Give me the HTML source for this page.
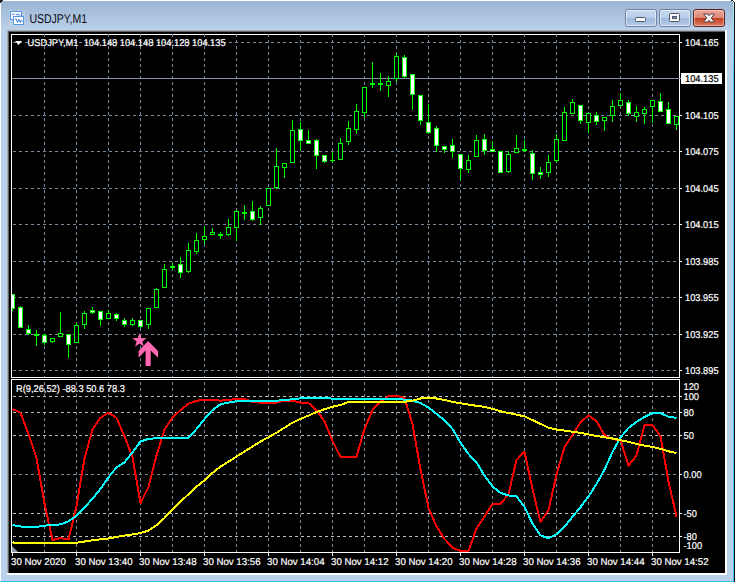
<!DOCTYPE html>
<html lang="en"><head><meta charset="utf-8"><title>USDJPY,M1</title>
<style>
html,body{margin:0;padding:0;background:#fff;}
body{width:737px;height:582px;overflow:hidden;position:relative;}
svg{position:absolute;left:0;top:0;display:block;}
text{font-family:"Liberation Sans",sans-serif;font-size:9.9px;text-rendering:geometricPrecision;}
.t{fill:#fff;}
</style></head><body>
<svg width="737" height="582" viewBox="0 0 737 582">
<defs>
<linearGradient id="tg" x1="0" y1="0" x2="0" y2="1"><stop offset="0" stop-color="#98b3d2"/><stop offset="1" stop-color="#bdd2ea"/></linearGradient>
<linearGradient id="bt" x1="0" y1="0" x2="0" y2="1"><stop offset="0" stop-color="#c6d8ee"/><stop offset="0.48" stop-color="#b9cfea"/><stop offset="0.5" stop-color="#9fb9da"/><stop offset="1" stop-color="#b4cbe8"/></linearGradient>
<linearGradient id="cl" x1="0" y1="0" x2="0" y2="1"><stop offset="0" stop-color="#eaa99c"/><stop offset="0.48" stop-color="#dc8876"/><stop offset="0.5" stop-color="#c13c1e"/><stop offset="1" stop-color="#dd7f68"/></linearGradient>
<linearGradient id="cy" x1="0" y1="2" x2="0" y2="582" gradientUnits="userSpaceOnUse"><stop offset="0" stop-color="#b4ecfa"/><stop offset="0.12" stop-color="#44c8f4"/><stop offset="1" stop-color="#38c4ee"/></linearGradient>
</defs>
<g shape-rendering="crispEdges">
<rect x="0" y="0" width="737" height="582" fill="#ffffff"/>
<rect x="734" y="3" width="1" height="579" fill="#1a1212"/>
<rect x="0" y="0" width="734" height="582" fill="#b9d1ea"/>
<rect x="0" y="0" width="734" height="31" fill="url(#tg)"/>
<rect x="0" y="0" width="734" height="1" fill="#ffffff"/>
<rect x="0" y="0" width="1" height="582" fill="#ffffff"/>
<rect x="733" y="2" width="1" height="580" fill="url(#cy)"/>
<rect x="0" y="581" width="734" height="1" fill="#2cc4e6"/>
<path d="M0 0h3v1h-1v1h-1v1h-1z" fill="#222"/>
<rect x="731" y="0" width="2" height="1" fill="#1c1c1c"/>
<rect x="733" y="0" width="1" height="1" fill="#ffffff"/>
<rect x="733" y="1" width="1" height="1" fill="#1c1c1c"/>
<rect x="734" y="2" width="1" height="1" fill="#1c1c1c"/>
<rect x="732" y="1" width="1" height="1" fill="#d8f4fc"/>
<rect x="7" y="30" width="720" height="545" fill="#ffffff"/>
<rect x="7" y="30" width="718" height="543" fill="#a9adb3"/>
<rect x="8" y="31" width="717" height="542" fill="#5f6368"/>
<rect x="9" y="32" width="716" height="541" fill="#000000"/>
</g>
<rect x="9" y="10" width="16" height="16" fill="#c9dcf3" fill-opacity="0.35"/>
<g shape-rendering="crispEdges">
<rect x="10.5" y="11.5" width="11" height="8" fill="#fbfcff" stroke="#5591f6"/>
<rect x="13.5" y="16.5" width="10" height="8" fill="#ffffff" stroke="#5591f6"/>
<rect x="12" y="11" width="1" height="1" fill="#4fae9a"/>
<rect x="15" y="11" width="1" height="1" fill="#4fae9a"/>
<rect x="18" y="11" width="1" height="1" fill="#4fae9a"/>
<rect x="16" y="16" width="1" height="1" fill="#4fae9a"/>
<rect x="19" y="16" width="1" height="1" fill="#4fae9a"/>
<rect x="22" y="16" width="1" height="1" fill="#4fae9a"/>
<rect x="15" y="24" width="1" height="1" fill="#4fae9a"/>
<rect x="18" y="24" width="1" height="1" fill="#4fae9a"/>
<rect x="21" y="24" width="1" height="1" fill="#4fae9a"/>
<rect x="10" y="13" width="1" height="1" fill="#4fae9a"/>
<rect x="10" y="16" width="1" height="1" fill="#4fae9a"/>
<rect x="13" y="19" width="1" height="1" fill="#4fae9a"/>
<rect x="23" y="19" width="1" height="1" fill="#4fae9a"/>
<rect x="13" y="22" width="1" height="1" fill="#4fae9a"/>
<rect x="23" y="22" width="1" height="1" fill="#4fae9a"/>
</g>
<polyline points="12,15 13.2,13.8 14.3,15" fill="none" stroke="#4a86f0" stroke-width="1"/>
<polyline points="15.5,13.8 16.8,15.2 18,13.8 19.2,15.2 20.5,15.2" fill="none" stroke="#4a86f0" stroke-width="1"/>
<polyline points="15,19 16.2,19 17.5,22.3 18.8,19.2 20.2,22.3 21.3,20 22.3,21.8" fill="none" stroke="#3a78e8" stroke-width="1"/>
<text x="29.4" y="23" style="font-size:12.8px" fill="#0c0c16" textLength="57.6" lengthAdjust="spacingAndGlyphs">USDJPY,M1</text>
<rect x="625.5" y="9.5" width="31" height="17" rx="2.5" ry="2.5" fill="url(#bt)" stroke="#6f83a0"/>
<rect x="626.5" y="10.5" width="29" height="15" rx="1.5" ry="1.5" fill="none" stroke="#ffffff" stroke-opacity="0.55"/>
<rect x="659.5" y="9.5" width="31" height="17" rx="2.5" ry="2.5" fill="url(#bt)" stroke="#6f83a0"/>
<rect x="660.5" y="10.5" width="29" height="15" rx="1.5" ry="1.5" fill="none" stroke="#ffffff" stroke-opacity="0.55"/>
<rect x="693.5" y="9.5" width="31" height="17" rx="2.5" ry="2.5" fill="url(#cl)" stroke="#5a1f24"/>
<rect x="694.5" y="10.5" width="29" height="15" rx="1.5" ry="1.5" fill="none" stroke="#ffd8cc" stroke-opacity="0.55"/>
<rect x="635.5" y="17.5" width="10" height="4" rx="1" fill="#fafafa" stroke="#4c5566"/>
<rect x="669.5" y="13.5" width="10" height="8" rx="1" fill="#fafafa" stroke="#4c5566"/>
<rect x="672.5" y="16.5" width="4" height="2" fill="#7f9cc4" stroke="#4c5566"/>
<path d="M703.5 14 L707.6 14 L709 15.7 L710.4 14 L714.5 14 L711.3 18 L714.5 22 L710.4 22 L709 20.3 L707.6 22 L703.5 22 L706.7 18 Z" fill="#f4f4f6" stroke="#5b4040" stroke-width="1" stroke-linejoin="round"/>
<g shape-rendering="crispEdges">
<rect x="11.5" y="34.5" width="668" height="343" fill="none" stroke="#fff"/>
<rect x="11.5" y="379.5" width="668" height="173" fill="none" stroke="#fff"/>
<line x1="44.5" y1="34" x2="44.5" y2="377" stroke="#778899" stroke-dasharray="3 3" stroke-dashoffset="0"/>
<line x1="44.5" y1="382" x2="44.5" y2="552" stroke="#778899" stroke-dasharray="3 3" stroke-dashoffset="0"/>
<line x1="76.5" y1="34" x2="76.5" y2="377" stroke="#778899" stroke-dasharray="3 3" stroke-dashoffset="0"/>
<line x1="76.5" y1="382" x2="76.5" y2="552" stroke="#778899" stroke-dasharray="3 3" stroke-dashoffset="0"/>
<line x1="108.5" y1="34" x2="108.5" y2="377" stroke="#778899" stroke-dasharray="3 3" stroke-dashoffset="0"/>
<line x1="108.5" y1="382" x2="108.5" y2="552" stroke="#778899" stroke-dasharray="3 3" stroke-dashoffset="0"/>
<line x1="140.5" y1="34" x2="140.5" y2="377" stroke="#778899" stroke-dasharray="3 3" stroke-dashoffset="0"/>
<line x1="140.5" y1="382" x2="140.5" y2="552" stroke="#778899" stroke-dasharray="3 3" stroke-dashoffset="0"/>
<line x1="172.5" y1="34" x2="172.5" y2="377" stroke="#778899" stroke-dasharray="3 3" stroke-dashoffset="0"/>
<line x1="172.5" y1="382" x2="172.5" y2="552" stroke="#778899" stroke-dasharray="3 3" stroke-dashoffset="0"/>
<line x1="204.5" y1="34" x2="204.5" y2="377" stroke="#778899" stroke-dasharray="3 3" stroke-dashoffset="0"/>
<line x1="204.5" y1="382" x2="204.5" y2="552" stroke="#778899" stroke-dasharray="3 3" stroke-dashoffset="0"/>
<line x1="236.5" y1="34" x2="236.5" y2="377" stroke="#778899" stroke-dasharray="3 3" stroke-dashoffset="0"/>
<line x1="236.5" y1="382" x2="236.5" y2="552" stroke="#778899" stroke-dasharray="3 3" stroke-dashoffset="0"/>
<line x1="268.5" y1="34" x2="268.5" y2="377" stroke="#778899" stroke-dasharray="3 3" stroke-dashoffset="0"/>
<line x1="268.5" y1="382" x2="268.5" y2="552" stroke="#778899" stroke-dasharray="3 3" stroke-dashoffset="0"/>
<line x1="300.5" y1="34" x2="300.5" y2="377" stroke="#778899" stroke-dasharray="3 3" stroke-dashoffset="0"/>
<line x1="300.5" y1="382" x2="300.5" y2="552" stroke="#778899" stroke-dasharray="3 3" stroke-dashoffset="0"/>
<line x1="332.5" y1="34" x2="332.5" y2="377" stroke="#778899" stroke-dasharray="3 3" stroke-dashoffset="0"/>
<line x1="332.5" y1="382" x2="332.5" y2="552" stroke="#778899" stroke-dasharray="3 3" stroke-dashoffset="0"/>
<line x1="364.5" y1="34" x2="364.5" y2="377" stroke="#778899" stroke-dasharray="3 3" stroke-dashoffset="0"/>
<line x1="364.5" y1="382" x2="364.5" y2="552" stroke="#778899" stroke-dasharray="3 3" stroke-dashoffset="0"/>
<line x1="396.5" y1="34" x2="396.5" y2="377" stroke="#778899" stroke-dasharray="3 3" stroke-dashoffset="0"/>
<line x1="396.5" y1="382" x2="396.5" y2="552" stroke="#778899" stroke-dasharray="3 3" stroke-dashoffset="0"/>
<line x1="428.5" y1="34" x2="428.5" y2="377" stroke="#778899" stroke-dasharray="3 3" stroke-dashoffset="0"/>
<line x1="428.5" y1="382" x2="428.5" y2="552" stroke="#778899" stroke-dasharray="3 3" stroke-dashoffset="0"/>
<line x1="460.5" y1="34" x2="460.5" y2="377" stroke="#778899" stroke-dasharray="3 3" stroke-dashoffset="0"/>
<line x1="460.5" y1="382" x2="460.5" y2="552" stroke="#778899" stroke-dasharray="3 3" stroke-dashoffset="0"/>
<line x1="492.5" y1="34" x2="492.5" y2="377" stroke="#778899" stroke-dasharray="3 3" stroke-dashoffset="0"/>
<line x1="492.5" y1="382" x2="492.5" y2="552" stroke="#778899" stroke-dasharray="3 3" stroke-dashoffset="0"/>
<line x1="524.5" y1="34" x2="524.5" y2="377" stroke="#778899" stroke-dasharray="3 3" stroke-dashoffset="0"/>
<line x1="524.5" y1="382" x2="524.5" y2="552" stroke="#778899" stroke-dasharray="3 3" stroke-dashoffset="0"/>
<line x1="556.5" y1="34" x2="556.5" y2="377" stroke="#778899" stroke-dasharray="3 3" stroke-dashoffset="0"/>
<line x1="556.5" y1="382" x2="556.5" y2="552" stroke="#778899" stroke-dasharray="3 3" stroke-dashoffset="0"/>
<line x1="588.5" y1="34" x2="588.5" y2="377" stroke="#778899" stroke-dasharray="3 3" stroke-dashoffset="0"/>
<line x1="588.5" y1="382" x2="588.5" y2="552" stroke="#778899" stroke-dasharray="3 3" stroke-dashoffset="0"/>
<line x1="620.5" y1="34" x2="620.5" y2="377" stroke="#778899" stroke-dasharray="3 3" stroke-dashoffset="0"/>
<line x1="620.5" y1="382" x2="620.5" y2="552" stroke="#778899" stroke-dasharray="3 3" stroke-dashoffset="0"/>
<line x1="652.5" y1="34" x2="652.5" y2="377" stroke="#778899" stroke-dasharray="3 3" stroke-dashoffset="0"/>
<line x1="652.5" y1="382" x2="652.5" y2="552" stroke="#778899" stroke-dasharray="3 3" stroke-dashoffset="0"/>
<line x1="13" y1="42.5" x2="679" y2="42.5" stroke="#778899" stroke-dasharray="3 3"/>
<line x1="13" y1="115.5" x2="679" y2="115.5" stroke="#778899" stroke-dasharray="3 3"/>
<line x1="13" y1="151.5" x2="679" y2="151.5" stroke="#778899" stroke-dasharray="3 3"/>
<line x1="13" y1="188.5" x2="679" y2="188.5" stroke="#778899" stroke-dasharray="3 3"/>
<line x1="13" y1="224.5" x2="679" y2="224.5" stroke="#778899" stroke-dasharray="3 3"/>
<line x1="13" y1="261.5" x2="679" y2="261.5" stroke="#778899" stroke-dasharray="3 3"/>
<line x1="13" y1="297.5" x2="679" y2="297.5" stroke="#778899" stroke-dasharray="3 3"/>
<line x1="13" y1="334.5" x2="679" y2="334.5" stroke="#778899" stroke-dasharray="3 3"/>
<line x1="13" y1="370.5" x2="679" y2="370.5" stroke="#778899" stroke-dasharray="3 3"/>
<line x1="13" y1="396.5" x2="679" y2="396.5" stroke="#c0c0c0" stroke-dasharray="3 3"/>
<line x1="13" y1="412.5" x2="679" y2="412.5" stroke="#c0c0c0" stroke-dasharray="3 3"/>
<line x1="13" y1="435.5" x2="679" y2="435.5" stroke="#c0c0c0" stroke-dasharray="3 3"/>
<line x1="13" y1="474.5" x2="679" y2="474.5" stroke="#778899" stroke-dasharray="3 3"/>
<line x1="13" y1="513.5" x2="679" y2="513.5" stroke="#c0c0c0" stroke-dasharray="3 3"/>
<line x1="13" y1="536.5" x2="679" y2="536.5" stroke="#c0c0c0" stroke-dasharray="3 3"/>
<rect x="12" y="78" width="669" height="1" fill="#8492a2"/>
<rect x="680" y="42" width="2" height="1" fill="#fff"/>
<rect x="680" y="115" width="2" height="1" fill="#fff"/>
<rect x="680" y="151" width="2" height="1" fill="#fff"/>
<rect x="680" y="188" width="2" height="1" fill="#fff"/>
<rect x="680" y="224" width="2" height="1" fill="#fff"/>
<rect x="680" y="261" width="2" height="1" fill="#fff"/>
<rect x="680" y="297" width="2" height="1" fill="#fff"/>
<rect x="680" y="334" width="2" height="1" fill="#fff"/>
<rect x="680" y="370" width="2" height="1" fill="#fff"/>
<rect x="680" y="396" width="2" height="1" fill="#fff"/>
<rect x="680" y="412" width="2" height="1" fill="#fff"/>
<rect x="680" y="435" width="2" height="1" fill="#fff"/>
<rect x="680" y="474" width="2" height="1" fill="#fff"/>
<rect x="680" y="513" width="2" height="1" fill="#fff"/>
<rect x="680" y="536" width="2" height="1" fill="#fff"/>
<rect x="12" y="553" width="1" height="3" fill="#fff"/>
<rect x="76" y="553" width="1" height="3" fill="#fff"/>
<rect x="140" y="553" width="1" height="3" fill="#fff"/>
<rect x="204" y="553" width="1" height="3" fill="#fff"/>
<rect x="268" y="553" width="1" height="3" fill="#fff"/>
<rect x="332" y="553" width="1" height="3" fill="#fff"/>
<rect x="396" y="553" width="1" height="3" fill="#fff"/>
<rect x="460" y="553" width="1" height="3" fill="#fff"/>
<rect x="524" y="553" width="1" height="3" fill="#fff"/>
<rect x="588" y="553" width="1" height="3" fill="#fff"/>
<rect x="652" y="553" width="1" height="3" fill="#fff"/>
<rect x="12" y="294" width="1" height="17" fill="#00ff00"/>
<rect x="10.5" y="294.5" width="4" height="14" fill="#fff" stroke="#00ff00"/>
<rect x="20" y="306" width="1" height="22" fill="#00ff00"/>
<rect x="18.5" y="307.5" width="4" height="20" fill="#fff" stroke="#00ff00"/>
<rect x="28" y="325" width="1" height="10" fill="#00ff00"/>
<rect x="26.5" y="329.5" width="4" height="4" fill="#fff" stroke="#00ff00"/>
<rect x="36" y="330" width="1" height="16" fill="#00ff00"/>
<rect x="34" y="334" width="5" height="2" fill="#00ff00"/>
<rect x="44" y="334" width="1" height="11" fill="#00ff00"/>
<rect x="42.5" y="335.5" width="4" height="7" fill="#fff" stroke="#00ff00"/>
<rect x="52" y="338" width="1" height="5" fill="#00ff00"/>
<rect x="50.5" y="338.5" width="4" height="3" fill="#000" stroke="#00ff00"/>
<rect x="60" y="312" width="1" height="25" fill="#00ff00"/>
<rect x="58.5" y="333.5" width="4" height="3" fill="#000" stroke="#00ff00"/>
<rect x="68" y="334" width="1" height="24" fill="#00ff00"/>
<rect x="66.5" y="334.5" width="4" height="10" fill="#fff" stroke="#00ff00"/>
<rect x="76" y="323" width="1" height="20" fill="#00ff00"/>
<rect x="74.5" y="325.5" width="4" height="17" fill="#000" stroke="#00ff00"/>
<rect x="84" y="311" width="1" height="18" fill="#00ff00"/>
<rect x="82.5" y="313.5" width="4" height="11" fill="#000" stroke="#00ff00"/>
<rect x="92" y="307" width="1" height="7" fill="#00ff00"/>
<rect x="90.5" y="310.5" width="4" height="2" fill="#fff" stroke="#00ff00"/>
<rect x="100" y="311" width="1" height="15" fill="#00ff00"/>
<rect x="98.5" y="311.5" width="4" height="8" fill="#fff" stroke="#00ff00"/>
<rect x="108" y="310" width="1" height="9" fill="#00ff00"/>
<rect x="106.5" y="313.5" width="4" height="5" fill="#000" stroke="#00ff00"/>
<rect x="116" y="313" width="1" height="8" fill="#00ff00"/>
<rect x="114.5" y="314.5" width="4" height="4" fill="#fff" stroke="#00ff00"/>
<rect x="124" y="318" width="1" height="9" fill="#00ff00"/>
<rect x="122.5" y="320.5" width="4" height="4" fill="#fff" stroke="#00ff00"/>
<rect x="132" y="318" width="1" height="8" fill="#00ff00"/>
<rect x="130.5" y="320.5" width="4" height="4" fill="#000" stroke="#00ff00"/>
<rect x="140" y="320" width="1" height="8" fill="#00ff00"/>
<rect x="138.5" y="320.5" width="4" height="6" fill="#fff" stroke="#00ff00"/>
<rect x="148" y="308" width="1" height="21" fill="#00ff00"/>
<rect x="146.5" y="308.5" width="4" height="16" fill="#000" stroke="#00ff00"/>
<rect x="156" y="288" width="1" height="20" fill="#00ff00"/>
<rect x="154.5" y="289.5" width="4" height="18" fill="#000" stroke="#00ff00"/>
<rect x="164" y="264" width="1" height="24" fill="#00ff00"/>
<rect x="162.5" y="269.5" width="4" height="18" fill="#000" stroke="#00ff00"/>
<rect x="172" y="263" width="1" height="7" fill="#00ff00"/>
<rect x="170" y="266" width="5" height="2" fill="#00ff00"/>
<rect x="180" y="257" width="1" height="21" fill="#00ff00"/>
<rect x="178.5" y="264.5" width="4" height="8" fill="#fff" stroke="#00ff00"/>
<rect x="188" y="243" width="1" height="30" fill="#00ff00"/>
<rect x="186.5" y="250.5" width="4" height="21" fill="#000" stroke="#00ff00"/>
<rect x="196" y="233" width="1" height="21" fill="#00ff00"/>
<rect x="194.5" y="240.5" width="4" height="11" fill="#000" stroke="#00ff00"/>
<rect x="204" y="226" width="1" height="18" fill="#00ff00"/>
<rect x="202.5" y="236.5" width="4" height="3" fill="#000" stroke="#00ff00"/>
<rect x="212" y="228" width="1" height="7" fill="#00ff00"/>
<rect x="210.5" y="232.5" width="4" height="2" fill="#000" stroke="#00ff00"/>
<rect x="220" y="232" width="1" height="7" fill="#00ff00"/>
<rect x="218" y="234" width="5" height="2" fill="#00ff00"/>
<rect x="228" y="219" width="1" height="17" fill="#00ff00"/>
<rect x="226.5" y="227.5" width="4" height="7" fill="#000" stroke="#00ff00"/>
<rect x="236" y="210" width="1" height="31" fill="#00ff00"/>
<rect x="234.5" y="211.5" width="4" height="16" fill="#000" stroke="#00ff00"/>
<rect x="244" y="205" width="1" height="15" fill="#00ff00"/>
<rect x="242" y="212" width="5" height="2" fill="#00ff00"/>
<rect x="252" y="201" width="1" height="20" fill="#00ff00"/>
<rect x="250.5" y="211.5" width="4" height="8" fill="#fff" stroke="#00ff00"/>
<rect x="260" y="206" width="1" height="19" fill="#00ff00"/>
<rect x="258.5" y="208.5" width="4" height="9" fill="#000" stroke="#00ff00"/>
<rect x="268" y="188" width="1" height="18" fill="#00ff00"/>
<rect x="266.5" y="188.5" width="4" height="17" fill="#000" stroke="#00ff00"/>
<rect x="276" y="148" width="1" height="41" fill="#00ff00"/>
<rect x="274.5" y="166.5" width="4" height="21" fill="#000" stroke="#00ff00"/>
<rect x="284" y="163" width="1" height="15" fill="#00ff00"/>
<rect x="282.5" y="163.5" width="4" height="4" fill="#000" stroke="#00ff00"/>
<rect x="292" y="120" width="1" height="43" fill="#00ff00"/>
<rect x="290.5" y="130.5" width="4" height="32" fill="#000" stroke="#00ff00"/>
<rect x="300" y="122" width="1" height="28" fill="#00ff00"/>
<rect x="298.5" y="129.5" width="4" height="11" fill="#fff" stroke="#00ff00"/>
<rect x="308" y="130" width="1" height="14" fill="#00ff00"/>
<rect x="306.5" y="140.5" width="4" height="3" fill="#fff" stroke="#00ff00"/>
<rect x="316" y="139" width="1" height="30" fill="#00ff00"/>
<rect x="314.5" y="140.5" width="4" height="15" fill="#fff" stroke="#00ff00"/>
<rect x="324" y="155" width="1" height="8" fill="#00ff00"/>
<rect x="322.5" y="155.5" width="4" height="6" fill="#fff" stroke="#00ff00"/>
<rect x="332" y="152" width="1" height="11" fill="#00ff00"/>
<rect x="330" y="160" width="5" height="1" fill="#00ff00"/>
<rect x="340" y="138" width="1" height="22" fill="#00ff00"/>
<rect x="338.5" y="143.5" width="4" height="16" fill="#000" stroke="#00ff00"/>
<rect x="348" y="121" width="1" height="24" fill="#00ff00"/>
<rect x="346.5" y="128.5" width="4" height="13" fill="#000" stroke="#00ff00"/>
<rect x="356" y="104" width="1" height="30" fill="#00ff00"/>
<rect x="354.5" y="111.5" width="4" height="18" fill="#000" stroke="#00ff00"/>
<rect x="364" y="87" width="1" height="31" fill="#00ff00"/>
<rect x="362.5" y="87.5" width="4" height="25" fill="#000" stroke="#00ff00"/>
<rect x="372" y="62" width="1" height="26" fill="#00ff00"/>
<rect x="370" y="83" width="5" height="2" fill="#00ff00"/>
<rect x="380" y="73" width="1" height="18" fill="#00ff00"/>
<rect x="378" y="83" width="5" height="2" fill="#00ff00"/>
<rect x="388" y="76" width="1" height="21" fill="#00ff00"/>
<rect x="386.5" y="81.5" width="4" height="4" fill="#000" stroke="#00ff00"/>
<rect x="396" y="53" width="1" height="29" fill="#00ff00"/>
<rect x="394.5" y="56.5" width="4" height="22" fill="#000" stroke="#00ff00"/>
<rect x="404" y="55" width="1" height="23" fill="#00ff00"/>
<rect x="402.5" y="57.5" width="4" height="19" fill="#fff" stroke="#00ff00"/>
<rect x="412" y="74" width="1" height="36" fill="#00ff00"/>
<rect x="410.5" y="74.5" width="4" height="20" fill="#fff" stroke="#00ff00"/>
<rect x="420" y="95" width="1" height="30" fill="#00ff00"/>
<rect x="418.5" y="95.5" width="4" height="25" fill="#fff" stroke="#00ff00"/>
<rect x="428" y="104" width="1" height="30" fill="#00ff00"/>
<rect x="426.5" y="122.5" width="4" height="10" fill="#fff" stroke="#00ff00"/>
<rect x="436" y="126" width="1" height="26" fill="#00ff00"/>
<rect x="434.5" y="128.5" width="4" height="17" fill="#fff" stroke="#00ff00"/>
<rect x="444" y="146" width="1" height="7" fill="#00ff00"/>
<rect x="442.5" y="146.5" width="4" height="3" fill="#fff" stroke="#00ff00"/>
<rect x="452" y="139" width="1" height="19" fill="#00ff00"/>
<rect x="450.5" y="145.5" width="4" height="6" fill="#fff" stroke="#00ff00"/>
<rect x="460" y="154" width="1" height="26" fill="#00ff00"/>
<rect x="458.5" y="154.5" width="4" height="14" fill="#fff" stroke="#00ff00"/>
<rect x="468" y="155" width="1" height="18" fill="#00ff00"/>
<rect x="466.5" y="160.5" width="4" height="9" fill="#000" stroke="#00ff00"/>
<rect x="476" y="135" width="1" height="22" fill="#00ff00"/>
<rect x="474.5" y="140.5" width="4" height="16" fill="#000" stroke="#00ff00"/>
<rect x="484" y="134" width="1" height="21" fill="#00ff00"/>
<rect x="482.5" y="139.5" width="4" height="11" fill="#fff" stroke="#00ff00"/>
<rect x="492" y="141" width="1" height="11" fill="#00ff00"/>
<rect x="490.5" y="149.5" width="4" height="2" fill="#fff" stroke="#00ff00"/>
<rect x="500" y="151" width="1" height="22" fill="#00ff00"/>
<rect x="498.5" y="151.5" width="4" height="21" fill="#fff" stroke="#00ff00"/>
<rect x="508" y="151" width="1" height="22" fill="#00ff00"/>
<rect x="506.5" y="154.5" width="4" height="17" fill="#000" stroke="#00ff00"/>
<rect x="516" y="135" width="1" height="18" fill="#00ff00"/>
<rect x="514.5" y="148.5" width="4" height="4" fill="#000" stroke="#00ff00"/>
<rect x="524" y="140" width="1" height="12" fill="#00ff00"/>
<rect x="522" y="149" width="5" height="2" fill="#00ff00"/>
<rect x="532" y="150" width="1" height="30" fill="#00ff00"/>
<rect x="530.5" y="153.5" width="4" height="20" fill="#fff" stroke="#00ff00"/>
<rect x="540" y="167" width="1" height="12" fill="#00ff00"/>
<rect x="538.5" y="172.5" width="4" height="2" fill="#fff" stroke="#00ff00"/>
<rect x="548" y="155" width="1" height="22" fill="#00ff00"/>
<rect x="546.5" y="162.5" width="4" height="10" fill="#000" stroke="#00ff00"/>
<rect x="556" y="134" width="1" height="29" fill="#00ff00"/>
<rect x="554.5" y="139.5" width="4" height="21" fill="#000" stroke="#00ff00"/>
<rect x="564" y="107" width="1" height="34" fill="#00ff00"/>
<rect x="562.5" y="112.5" width="4" height="28" fill="#000" stroke="#00ff00"/>
<rect x="572" y="99" width="1" height="15" fill="#00ff00"/>
<rect x="570.5" y="102.5" width="4" height="11" fill="#000" stroke="#00ff00"/>
<rect x="580" y="105" width="1" height="19" fill="#00ff00"/>
<rect x="578.5" y="105.5" width="4" height="15" fill="#fff" stroke="#00ff00"/>
<rect x="588" y="113" width="1" height="20" fill="#00ff00"/>
<rect x="586.5" y="113.5" width="4" height="9" fill="#000" stroke="#00ff00"/>
<rect x="596" y="112" width="1" height="13" fill="#00ff00"/>
<rect x="594.5" y="115.5" width="4" height="6" fill="#fff" stroke="#00ff00"/>
<rect x="604" y="117" width="1" height="14" fill="#00ff00"/>
<rect x="602.5" y="117.5" width="4" height="3" fill="#000" stroke="#00ff00"/>
<rect x="612" y="100" width="1" height="22" fill="#00ff00"/>
<rect x="610.5" y="106.5" width="4" height="9" fill="#000" stroke="#00ff00"/>
<rect x="620" y="93" width="1" height="14" fill="#00ff00"/>
<rect x="618.5" y="100.5" width="4" height="5" fill="#000" stroke="#00ff00"/>
<rect x="628" y="100" width="1" height="16" fill="#00ff00"/>
<rect x="626.5" y="102.5" width="4" height="11" fill="#fff" stroke="#00ff00"/>
<rect x="636" y="106" width="1" height="16" fill="#00ff00"/>
<rect x="634.5" y="112.5" width="4" height="4" fill="#000" stroke="#00ff00"/>
<rect x="644" y="107" width="1" height="17" fill="#00ff00"/>
<rect x="642.5" y="109.5" width="4" height="4" fill="#000" stroke="#00ff00"/>
<rect x="652" y="100" width="1" height="23" fill="#00ff00"/>
<rect x="650.5" y="100.5" width="4" height="6" fill="#000" stroke="#00ff00"/>
<rect x="660" y="93" width="1" height="19" fill="#00ff00"/>
<rect x="658.5" y="101.5" width="4" height="10" fill="#fff" stroke="#00ff00"/>
<rect x="668" y="102" width="1" height="22" fill="#00ff00"/>
<rect x="666.5" y="109.5" width="4" height="14" fill="#fff" stroke="#00ff00"/>
<rect x="676" y="116" width="1" height="14" fill="#00ff00"/>
<rect x="674.5" y="116.5" width="4" height="8" fill="#000" stroke="#00ff00"/>
<rect x="9" y="290" width="2" height="30" fill="#000"/>
<rect x="11" y="290" width="1" height="30" fill="#fff"/>
<path d="M12 546 L12 552 L18 552 Z" fill="#8d97a6" shape-rendering="geometricPrecision"/>
<rect x="681" y="73" width="41" height="11" fill="#fff"/>
</g>
<path d="M15 41 L22 41 L18.5 45 Z" fill="#fff"/>
<path d="M148.1 341 L158 351 L158 357.7 L150.7 350.4 L150.7 366 L145.6 366 L145.6 350.4 L138.6 357.7 L138.6 351 Z" fill="#ff69b4"/>
<polygon points="139.50,332.90 141.26,338.07 146.73,338.15 142.35,341.43 143.97,346.65 139.50,343.50 135.03,346.65 136.65,341.43 132.27,338.15 137.74,338.07" fill="#ff69b4"/>
<clipPath id="sc"><rect x="12" y="380" width="667" height="172"/></clipPath>
<g clip-path="url(#sc)">
<polyline points="12.5,409.0 20.5,412.7 28.5,434.0 36.5,458.0 44.5,503.5 52.5,540.0 60.5,538.0 68.5,539.5 76.5,506.0 84.5,458.6 92.5,429.5 100.5,417.7 108.5,412.7 116.5,417.7 124.5,436.5 132.5,457.0 140.5,503.3 148.5,487.0 156.5,455.5 164.5,429.5 172.5,417.7 180.5,410.1 188.5,403.8 196.5,400.8 204.5,399.6 212.5,400.0 220.5,400.6 228.5,400.0 236.5,399.0 244.5,399.0 252.5,402.0 260.5,402.6 268.5,402.6 276.5,402.6 284.5,400.8 292.5,400.8 300.5,402.6 308.5,403.0 316.5,410.1 324.5,421.5 332.5,441.0 340.5,456.6 348.5,456.6 356.5,456.6 364.5,429.0 372.5,410.0 380.5,401.3 388.5,396.3 396.5,395.8 404.5,398.0 412.5,424.0 420.5,469.5 428.5,507.8 436.5,526.4 444.5,538.9 452.5,547.7 460.5,551.0 468.5,551.0 476.5,528.5 484.5,516.5 492.5,504.0 500.5,504.0 508.5,494.3 516.5,460.0 524.5,451.8 532.5,488.9 540.5,522.2 548.5,510.2 556.5,474.6 564.5,447.0 572.5,435.1 580.5,422.5 588.5,415.4 596.5,421.3 604.5,435.1 612.5,439.3 620.5,440.1 628.5,465.6 636.5,455.4 644.5,425.2 652.5,425.2 660.5,436.2 668.5,481.4 676.5,516.6" fill="none" stroke="#ff0000" stroke-width="2" stroke-linejoin="round" shape-rendering="crispEdges"/>
<polyline points="12.5,525.1 20.5,526.5 28.5,527.0 36.5,526.9 44.5,525.6 52.5,525.2 60.5,524.4 68.5,521.3 76.5,515.8 84.5,507.5 92.5,498.7 100.5,488.7 108.5,477.4 116.5,467.4 124.5,462.4 132.5,452.3 140.5,441.5 148.5,438.8 156.5,438.3 164.5,438.0 172.5,438.0 180.5,438.0 188.5,438.0 196.5,429.0 204.5,419.0 212.5,410.0 220.5,404.3 228.5,402.6 236.5,401.3 244.5,400.8 252.5,400.8 260.5,400.8 268.5,400.8 276.5,400.8 284.5,400.0 292.5,399.3 300.5,398.3 308.5,398.0 316.5,398.0 324.5,398.0 332.5,398.6 340.5,399.0 348.5,399.0 356.5,399.0 364.5,399.0 372.5,399.0 380.5,399.0 388.5,399.0 396.5,399.0 404.5,399.6 412.5,400.6 420.5,403.0 428.5,407.6 436.5,413.9 444.5,420.2 452.5,429.0 460.5,442.7 468.5,454.0 476.5,462.5 484.5,475.5 492.5,486.5 500.5,492.8 508.5,495.5 516.5,496.2 524.5,507.0 532.5,523.4 540.5,535.4 548.5,538.2 556.5,534.3 564.5,526.8 572.5,516.7 580.5,507.2 588.5,496.5 596.5,484.0 604.5,469.6 612.5,452.0 620.5,437.5 628.5,427.9 636.5,421.9 644.5,416.9 652.5,413.1 660.5,413.1 668.5,416.7 676.5,417.9" fill="none" stroke="#00ffff" stroke-width="2" stroke-linejoin="round" shape-rendering="crispEdges"/>
<polyline points="12.5,542.4 20.5,543.2 28.5,543.3 36.5,543.3 44.5,543.3 52.5,543.3 60.5,543.3 68.5,543.2 76.5,542.7 84.5,541.5 92.5,540.2 100.5,539.3 108.5,538.4 116.5,537.0 124.5,535.6 132.5,534.4 140.5,533.1 148.5,530.5 156.5,525.3 164.5,518.0 172.5,509.3 180.5,501.7 188.5,494.2 196.5,486.7 204.5,480.4 212.5,472.9 220.5,466.6 228.5,461.6 236.5,456.6 244.5,451.5 252.5,446.5 260.5,441.5 268.5,437.2 276.5,432.7 284.5,427.7 292.5,422.7 300.5,418.9 308.5,415.6 316.5,412.1 324.5,409.2 332.5,406.7 340.5,405.0 348.5,402.0 356.5,401.8 364.5,401.8 372.5,401.8 380.5,401.8 388.5,401.8 396.5,401.8 404.5,401.8 412.5,400.6 420.5,398.5 428.5,398.3 436.5,398.5 444.5,400.0 452.5,401.8 460.5,403.3 468.5,404.6 476.5,405.8 484.5,406.8 492.5,408.8 500.5,411.3 508.5,413.1 516.5,414.6 524.5,416.4 532.5,420.1 540.5,423.9 548.5,427.7 556.5,429.5 564.5,430.6 572.5,431.7 580.5,432.8 588.5,434.4 596.5,436.0 604.5,437.3 612.5,438.5 620.5,440.1 628.5,441.9 636.5,443.9 644.5,445.6 652.5,446.9 660.5,448.8 668.5,451.3 676.5,453.1" fill="none" stroke="#ffff00" stroke-width="2" stroke-linejoin="round" shape-rendering="crispEdges"/>
</g>
<text transform="translate(27.6,46) scale(0.94,1)" fill="#fff" stroke="#fff" stroke-width="0.2" xml:space="preserve">USDJPY,M1  104.148 104.148 104.128 104.135</text>
<text transform="translate(16,392) scale(0.94,1)" fill="#fff" stroke="#fff" stroke-width="0.2" xml:space="preserve">R(9,26,52) -88.3 50.6 78.3</text>
<text transform="translate(685,46) scale(0.94,1)" fill="#fff" stroke="#fff" stroke-width="0.2" xml:space="preserve">104.165</text>
<text transform="translate(685,119) scale(0.94,1)" fill="#fff" stroke="#fff" stroke-width="0.2" xml:space="preserve">104.105</text>
<text transform="translate(685,155) scale(0.94,1)" fill="#fff" stroke="#fff" stroke-width="0.2" xml:space="preserve">104.075</text>
<text transform="translate(685,192) scale(0.94,1)" fill="#fff" stroke="#fff" stroke-width="0.2" xml:space="preserve">104.045</text>
<text transform="translate(685,228) scale(0.94,1)" fill="#fff" stroke="#fff" stroke-width="0.2" xml:space="preserve">104.015</text>
<text transform="translate(685,265) scale(0.94,1)" fill="#fff" stroke="#fff" stroke-width="0.2" xml:space="preserve">103.985</text>
<text transform="translate(685,301) scale(0.94,1)" fill="#fff" stroke="#fff" stroke-width="0.2" xml:space="preserve">103.955</text>
<text transform="translate(685,338) scale(0.94,1)" fill="#fff" stroke="#fff" stroke-width="0.2" xml:space="preserve">103.925</text>
<text transform="translate(685,374) scale(0.94,1)" fill="#fff" stroke="#fff" stroke-width="0.2" xml:space="preserve">103.895</text>
<text transform="translate(685,82) scale(0.94,1)" fill="#000" stroke="#000" stroke-width="0.2" xml:space="preserve">104.135</text>
<text transform="translate(683.5,390) scale(0.94,1)" fill="#fff" stroke="#fff" stroke-width="0.2" xml:space="preserve">120</text>
<text transform="translate(683.5,400) scale(0.94,1)" fill="#fff" stroke="#fff" stroke-width="0.2" xml:space="preserve">100</text>
<text transform="translate(683.5,416) scale(0.94,1)" fill="#fff" stroke="#fff" stroke-width="0.2" xml:space="preserve">80</text>
<text transform="translate(683.5,439) scale(0.94,1)" fill="#fff" stroke="#fff" stroke-width="0.2" xml:space="preserve">50</text>
<text transform="translate(683.5,478) scale(0.94,1)" fill="#fff" stroke="#fff" stroke-width="0.2" xml:space="preserve">0.00</text>
<text transform="translate(683.5,517) scale(0.94,1)" fill="#fff" stroke="#fff" stroke-width="0.2" xml:space="preserve">-50</text>
<text transform="translate(683.5,540) scale(0.94,1)" fill="#fff" stroke="#fff" stroke-width="0.2" xml:space="preserve">-80</text>
<text transform="translate(683.5,549) scale(0.94,1)" fill="#fff" stroke="#fff" stroke-width="0.2" xml:space="preserve">-100</text>
<text transform="translate(11,565) scale(0.98,1)" fill="#fff" stroke="#fff" stroke-width="0.2" xml:space="preserve">30 Nov 2020</text>
<text transform="translate(75,565) scale(0.98,1)" fill="#fff" stroke="#fff" stroke-width="0.2" xml:space="preserve">30 Nov 13:40</text>
<text transform="translate(139,565) scale(0.98,1)" fill="#fff" stroke="#fff" stroke-width="0.2" xml:space="preserve">30 Nov 13:48</text>
<text transform="translate(203,565) scale(0.98,1)" fill="#fff" stroke="#fff" stroke-width="0.2" xml:space="preserve">30 Nov 13:56</text>
<text transform="translate(267,565) scale(0.98,1)" fill="#fff" stroke="#fff" stroke-width="0.2" xml:space="preserve">30 Nov 14:04</text>
<text transform="translate(331,565) scale(0.98,1)" fill="#fff" stroke="#fff" stroke-width="0.2" xml:space="preserve">30 Nov 14:12</text>
<text transform="translate(395,565) scale(0.98,1)" fill="#fff" stroke="#fff" stroke-width="0.2" xml:space="preserve">30 Nov 14:20</text>
<text transform="translate(459,565) scale(0.98,1)" fill="#fff" stroke="#fff" stroke-width="0.2" xml:space="preserve">30 Nov 14:28</text>
<text transform="translate(523,565) scale(0.98,1)" fill="#fff" stroke="#fff" stroke-width="0.2" xml:space="preserve">30 Nov 14:36</text>
<text transform="translate(587,565) scale(0.98,1)" fill="#fff" stroke="#fff" stroke-width="0.2" xml:space="preserve">30 Nov 14:44</text>
<text transform="translate(651,565) scale(0.98,1)" fill="#fff" stroke="#fff" stroke-width="0.2" xml:space="preserve">30 Nov 14:52</text>
</svg>
</body></html>
